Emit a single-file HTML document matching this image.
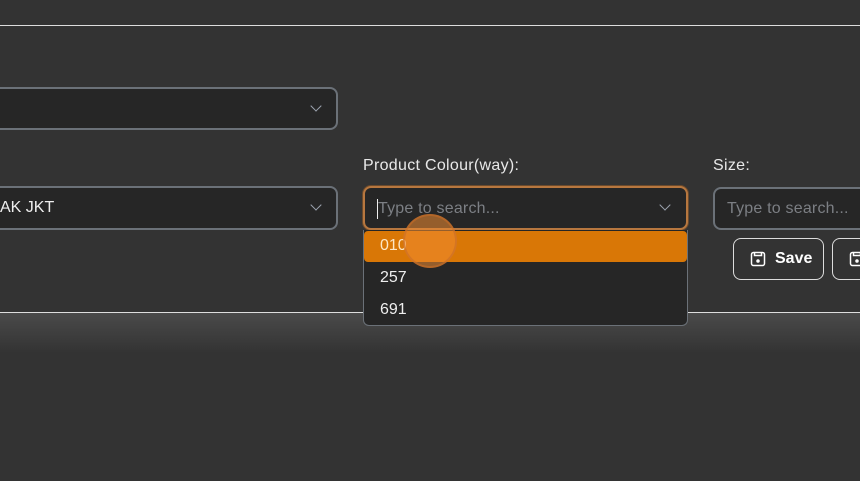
<!DOCTYPE html>
<html><head><style>
body{margin:0;width:860px;height:481px;background:#333;position:relative;overflow:hidden;font-family:"Liberation Sans",sans-serif;}
.abs{position:absolute;box-sizing:border-box;}
.line{left:0;width:860px;height:1px;background:#ddd;}
.sel{background:#262626;border:2px solid #6b7178;border-radius:8px;}
.chev{position:absolute;width:7px;height:7px;border-right:1.5px solid #9ca3af;border-bottom:1.5px solid #9ca3af;transform:rotate(45deg);}
.lbl{color:#e8e8e8;font-size:16px;letter-spacing:0.3px;}
.ph{color:#7c7f84;font-size:16px;letter-spacing:0.2px;}
.opt{color:#eee;font-size:16px;left:380px;}
.btn{border:1px solid #ddd;border-radius:8px;height:42px;top:238px;color:#fff;font-weight:bold;font-size:16px;}
</style></head><body>
<div class="abs line" style="top:25px"></div>
<div class="abs" style="top:313px;left:0;width:860px;height:40px;background:linear-gradient(#4a4a4a,#333)"></div>
<div class="abs line" style="top:312px"></div>

<div class="abs sel" style="left:-10px;top:87px;width:348px;height:43px"><div class="chev" style="right:16px;top:13px"></div></div>
<div class="abs sel" style="left:-10px;top:186px;width:348px;height:44px"><div class="chev" style="right:16px;top:13px"></div>
<span style="position:absolute;left:8px;top:11px;color:#eee;font-size:16px">AK JKT</span></div>

<div class="abs lbl" style="left:363px;top:157px">Product Colour(way):</div>
<div class="abs sel" style="left:363px;top:186px;width:325px;height:44px;border-color:#b7773f;box-shadow:0 0 0 1px #6b4a2c">
<div style="position:absolute;left:12px;top:11px;width:1px;height:20px;background:#eee"></div>
<span class="ph" style="position:absolute;left:13px;top:12px">Type to search...</span>
<div class="chev" style="right:17px;top:13px"></div></div>

<div class="abs" style="left:363px;top:230px;width:325px;height:96px;background:#262626;border:1px solid #6b7178;border-top:none;border-radius:0 0 6px 6px"></div>
<div class="abs" style="left:364px;top:231px;width:323px;height:31px;background:#d97706;border-radius:4px"></div>
<div class="abs opt" style="top:237px;color:#fde7c6">010</div>
<div class="abs opt" style="top:269px">257</div>
<div class="abs opt" style="top:301px">691</div>
<div class="abs" style="left:403px;top:214px;width:54px;height:54px;border-radius:50%;background:rgba(240,140,50,0.55);border:2px solid rgba(200,110,40,0.6)"></div>

<div class="abs lbl" style="left:713px;top:157px">Size:</div>
<div class="abs sel" style="left:713px;top:187px;width:170px;height:43px"><span class="ph" style="position:absolute;left:12px;top:11px">Type to search...</span></div>

<div class="abs btn" style="left:733px;width:91px">
<svg style="position:absolute;left:16px;top:12px" width="16" height="16" viewBox="0 0 16 16" fill="none" stroke="#fff" stroke-width="1.5"><rect x="1.5" y="1.5" width="13" height="13" rx="2"/><path d="M4.5 1.5v3h7v-3"/><circle cx="8" cy="10" r="1" fill="#fff"/></svg>
<span style="position:absolute;left:41px;top:11px">Save</span></div>
<div class="abs btn" style="left:832px;width:60px">
<svg style="position:absolute;left:16px;top:12px" width="16" height="16" viewBox="0 0 16 16" fill="none" stroke="#fff" stroke-width="1.5"><rect x="1.5" y="1.5" width="13" height="13" rx="2"/><path d="M4.5 1.5v3h7v-3"/><circle cx="8" cy="10" r="1" fill="#fff"/></svg></div>
</body></html>
